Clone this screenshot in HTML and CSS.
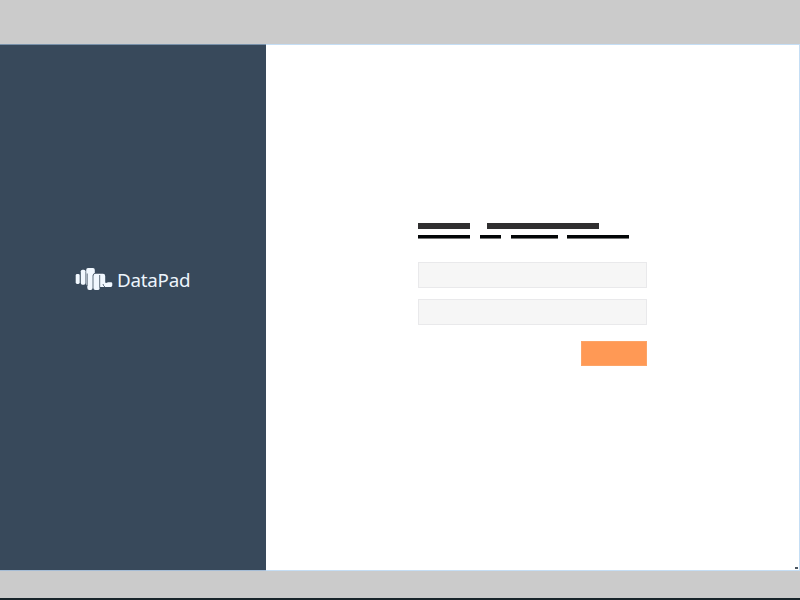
FILE: index.html
```html
<!DOCTYPE html>
<html lang="en">
<head>
<meta charset="utf-8">
<title>DataPad</title>
<link rel="stylesheet" href="styles.css">
</head>
<body>
<div class="top-bar"></div>
<main class="window">
  <aside class="brand">
    <svg class="logo" viewBox="0 0 38 24" aria-hidden="true">
      <g class="shape">
        <rect x="0.7" y="7" width="4" height="10" rx="1.4"/>
        <rect x="5.8" y="2.7" width="4.7" height="15" rx="1.6"/>
        <path d="M11.2 3Q11.2 1 13 1H18Q19.8 1 19.8 3V6Q17.8 6.8 17.6 8.5V21Q17.4 23 15.8 23H14.2Q12.3 23 12.3 20.8V18.8Q11.2 18.3 11.2 17Z"/>
        <path d="M18.4 9Q18.4 6.8 20.6 6.8H28Q30.2 6.8 30.2 9V15.2Q30.5 16.3 31.7 15.8Q32 15.3 33.4 15.3H36Q37.3 15.3 37.3 16.5V18.3Q37.3 20 35.8 20H24.6V21.4Q24.4 23 22.8 23H20.4Q18.4 23 18.4 21Z"/>
      </g>
      <path class="cuts" d="M12.2 6.5V19M24.7 8V20.5M30 20Q28.3 19 28 17"/>
    </svg>
    <span class="name">DataPad</span>
  </aside>
  <section class="content">
    <form class="login">
      <div class="title"><i class="t1"></i><i class="t2"></i></div>
      <div class="subtitle"><i class="s1"></i><i class="s2"></i><i class="s3"></i><i class="s4"></i></div>
      <div class="field"></div>
      <div class="field"></div>
      <div class="button"></div>
    </form>
    <span class="corner"></span>
  </section>
</main>
<footer class="bottom-bar"></footer>
</body>
</html>
```

FILE: styles.css
```css
* { box-sizing: border-box; }
body {
  margin: 0;
  height: 600px;
  display: flex;
  flex-direction: column;
  overflow: hidden;
  background: #cbcbcb;
}
.top-bar { height: 44px; background: #cbcbcb; }
.window { display: flex; height: 527px; }
.brand {
  width: 266px;
  display: flex;
  align-items: center;
  padding: 0 0 57px 75px;
  background: #38495b;
  border-top: 1px solid #7891aa;
  border-bottom: 1px solid #a5bcd5;
}
.logo { width: 38px; height: 24px; flex: none; }
.shape { fill: #f1f8ff; }
.cuts { fill: none; stroke: #38495b; stroke-width: 0.8; }
.name {
  margin-left: 4px;
  font: 18.8px/24px "Noto Sans", sans-serif;
  letter-spacing: -0.25px;
  color: #edf5fd;
  position: relative;
  top: 1px;
}
.content {
  position: relative;
  flex: 1;
  background: #fff;
  border: 1px solid #c5def5;
  border-left: 0;
}
.login { width: 229px; margin: 178px 0 0 152px; }
.title, .subtitle { display: flex; }
.title i { height: 6px; background: #302f30; }
.subtitle { margin: 6px 0 23px; }
.subtitle i { height: 4px; background: #030607; border-bottom: 1px solid #777; }
.t1 { width: 52px; margin-right: 17px; }
.t2 { width: 112px; }
.s1 { width: 52px; margin-right: 10px; }
.s2 { width: 21px; margin-right: 10px; }
.s3 { width: 47px; margin-right: 9px; }
.s4 { width: 62px; }
.field { height: 26px; margin-bottom: 11px; background: #f6f6f6; border: 1px solid #e9e9eb; }
.button { width: 66px; height: 25px; margin: 16px 0 0 auto; background: #ff9955; border: 1px solid #fca467; }
.corner { position: absolute; right: 1px; bottom: 1px; width: 3px; height: 2px; background: #4a5560; }
.bottom-bar { height: 29px; background: #cbcbcb; border-bottom: 2px solid #18242a; }
```
